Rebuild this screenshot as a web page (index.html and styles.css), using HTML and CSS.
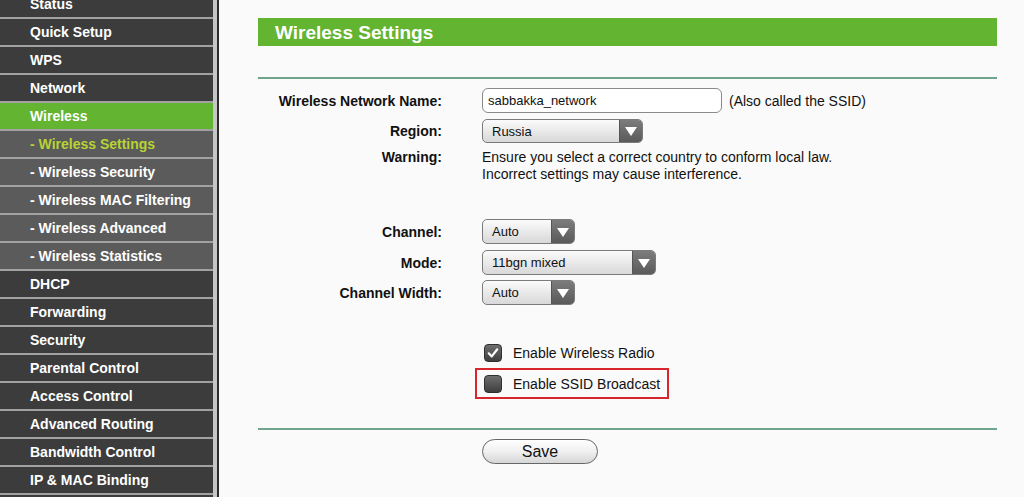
FILE: index.html
```html
<!DOCTYPE html>
<html>
<head>
<meta charset="utf-8">
<link rel="stylesheet" href="styles.css">
</head>
<body>
<div class="page">
  <nav class="sidebar">
    <ul class="menu">
      <li class="item">Status</li>
      <li class="item">Quick Setup</li>
      <li class="item">WPS</li>
      <li class="item">Network</li>
      <li class="item active">Wireless</li>
      <li class="item sub current">- Wireless Settings</li>
      <li class="item sub">- Wireless Security</li>
      <li class="item sub">- Wireless MAC Filtering</li>
      <li class="item sub">- Wireless Advanced</li>
      <li class="item sub">- Wireless Statistics</li>
      <li class="item">DHCP</li>
      <li class="item">Forwarding</li>
      <li class="item">Security</li>
      <li class="item">Parental Control</li>
      <li class="item">Access Control</li>
      <li class="item">Advanced Routing</li>
      <li class="item">Bandwidth Control</li>
      <li class="item">IP &amp; MAC Binding</li>
      <li class="item"></li>
    </ul>
  </nav>
  <main class="content">
    <div class="title-bar"><h1 class="title">Wireless Settings</h1></div>
    <div class="rule rule-top"></div>
    <div class="form">
      <div class="row row-name">
        <div class="lbl">Wireless Network Name:</div>
        <div class="ctl">
          <div class="textbox">sabbakka_network</div>
          <span class="hint">(Also called the SSID)</span>
        </div>
      </div>
      <div class="row row-region">
        <div class="lbl">Region:</div>
        <div class="ctl">
          <div class="select w-region"><span class="sel-text">Russia</span><span class="sel-arrow"></span></div>
        </div>
      </div>
      <div class="row row-warning">
        <div class="lbl">Warning:</div>
        <div class="ctl warn-text">Ensure you select a correct country to conform local law.<br>Incorrect settings may cause interference.</div>
      </div>
      <div class="row row-channel">
        <div class="lbl">Channel:</div>
        <div class="ctl">
          <div class="select w-small"><span class="sel-text">Auto</span><span class="sel-arrow"></span></div>
        </div>
      </div>
      <div class="row row-mode">
        <div class="lbl">Mode:</div>
        <div class="ctl">
          <div class="select w-mode"><span class="sel-text">11bgn mixed</span><span class="sel-arrow"></span></div>
        </div>
      </div>
      <div class="row row-width">
        <div class="lbl">Channel Width:</div>
        <div class="ctl">
          <div class="select w-small"><span class="sel-text">Auto</span><span class="sel-arrow"></span></div>
        </div>
      </div>
      <div class="row row-check1">
        <div class="lbl"></div>
        <div class="ctl">
          <div class="check-wrap">
            <span class="checkbox checked"><svg viewBox="0 0 18 18" width="18" height="18"><path d="M4.2 9.4 L7.6 12.8 L13.8 4.8" fill="none" stroke="#fff" stroke-width="2.4" stroke-linecap="round" stroke-linejoin="round"/></svg></span>
            <span class="check-label">Enable Wireless Radio</span>
          </div>
        </div>
      </div>
      <div class="row row-check2">
        <div class="lbl"></div>
        <div class="ctl">
          <div class="check-wrap highlight">
            <span class="checkbox"></span>
            <span class="check-label">Enable SSID Broadcast</span>
          </div>
        </div>
      </div>
    </div>
    <div class="rule rule-bottom"></div>
    <div class="row row-save">
      <div class="lbl"></div>
      <div class="ctl"><div class="btn">Save</div></div>
    </div>
  </main>
</div>
</body>
</html>
```

FILE: styles.css
```css
* { box-sizing: border-box; }
html, body {
  margin: 0;
  padding: 0;
  height: 100%;
  overflow: hidden;
  background: #fafafa;
  font-family: "Liberation Sans", Arial, Helvetica, sans-serif;
}
.page {
  display: flex;
  height: 497px;
}
.sidebar {
  width: 219px;
  flex: 0 0 219px;
  background: #c6c6c6;
  padding-right: 4px;
  border-right: 2px solid #2b2b2b;
  overflow: hidden;
}
.menu {
  list-style: none;
  margin: -9px 0 0 0;
  padding: 0;
}
.item {
  height: 28px;
  line-height: 26px;
  padding-left: 30px;
  background: #3c3c3c;
  border-bottom: 2px solid #a2a2a2;
  color: #ffffff;
  font-weight: bold;
  font-size: 14px;
  white-space: nowrap;
}
.item.active {
  background: #62b431;
}
.item.sub {
  background: #5b5b5b;
}
.item.current {
  color: #b8d334;
}
.content {
  flex: 1;
  padding: 18px 27px 0 39px;
}
.title-bar {
  height: 28px;
  background: #62b431;
  padding-left: 17px;
  padding-top: 1px;
  display: flex;
  align-items: center;
}
.title {
  margin: 0;
  color: #ffffff;
  font-size: 19px;
  font-weight: bold;
}
.rule {
  height: 2px;
  background: #6ea58c;
}
.rule-top { margin-top: 31px; }
.rule-bottom { margin-top: 29px; }
.row {
  display: flex;
  align-items: center;
  column-gap: 40px;
}
.lbl {
  width: 184px;
  flex: 0 0 184px;
  text-align: right;
  font-weight: bold;
  font-size: 14px;
  color: #111;
}
.ctl {
  display: flex;
  align-items: center;
  font-size: 14px;
  color: #111;
}
.row-name { margin-top: 9px; height: 25px; }
.row-region { margin-top: 6px; height: 24px; }
.row-warning { margin-top: 6px; align-items: flex-start; line-height: 17px; }
.row-channel { margin-top: 36px; height: 25px; }
.row-mode { margin-top: 6px; height: 25px; }
.row-width { margin-top: 5px; height: 25px; }
.row-check1 { margin-top: 32px; height: 31px; }
.row-check2 { height: 31px; }
.row-save { margin-top: 9px; height: 25px; }

.textbox {
  width: 240px;
  height: 25px;
  border: 1px solid #8a8a8a;
  border-radius: 6px;
  background: #ffffff;
  font-size: 13px;
  line-height: 23px;
  padding-left: 5px;
  color: #111;
}
.hint {
  margin-left: 7px;
  font-size: 14px;
}
.warn-text {
  display: block;
  font-size: 14px;
  line-height: 17px;
}
.select {
  display: flex;
  height: 100%;
  border: 1px solid #7b7b7b;
  border-radius: 5px;
  overflow: hidden;
  background: linear-gradient(#fbfbfb, #e6e6e6 60%, #d8d8d8);
}
.row .ctl { height: 100%; }
.row-warning .ctl, .row-check1 .ctl, .row-check2 .ctl { height: auto; }
.w-region { width: 161px; }
.w-small { width: 93px; }
.w-mode { width: 174px; }
.sel-text {
  flex: 1;
  padding-left: 9px;
  font-size: 13px;
  display: flex;
  align-items: center;
  color: #111;
}
.sel-arrow {
  width: 23px;
  flex: 0 0 23px;
  background: linear-gradient(#7c7c7c, #5a5a5a);
  border-left: 1px solid #555;
  position: relative;
}
.sel-arrow::after {
  content: "";
  position: absolute;
  left: 50%;
  top: 50%;
  margin-left: -6px;
  margin-top: -4px;
  border-left: 6px solid transparent;
  border-right: 6px solid transparent;
  border-top: 9px solid #ffffff;
}
.check-wrap {
  display: flex;
  align-items: center;
  height: 31px;
  padding-left: 7px;
  margin-left: -7px;
  width: 194px;
  border: 2px solid transparent;
}
.check-wrap.highlight {
  border-color: #d8262c;
}
.checkbox {
  width: 18px;
  height: 18px;
  flex: 0 0 18px;
  border-radius: 4px;
  border: 1px solid #2f2f2f;
  background: linear-gradient(#6e6e6e, #3f3f3f);
  display: flex;
  align-items: center;
  justify-content: center;
}
.checkbox svg { display: block; }
.check-label {
  margin-left: 11px;
  font-size: 14px;
  color: #111;
}
.btn {
  width: 116px;
  height: 25px;
  border: 1px solid #666;
  border-radius: 13px;
  background: linear-gradient(#ffffff, #f0f0f0 50%, #d6d6d6);
  font-size: 16px;
  display: flex;
  align-items: center;
  justify-content: center;
  color: #111;
}
```
